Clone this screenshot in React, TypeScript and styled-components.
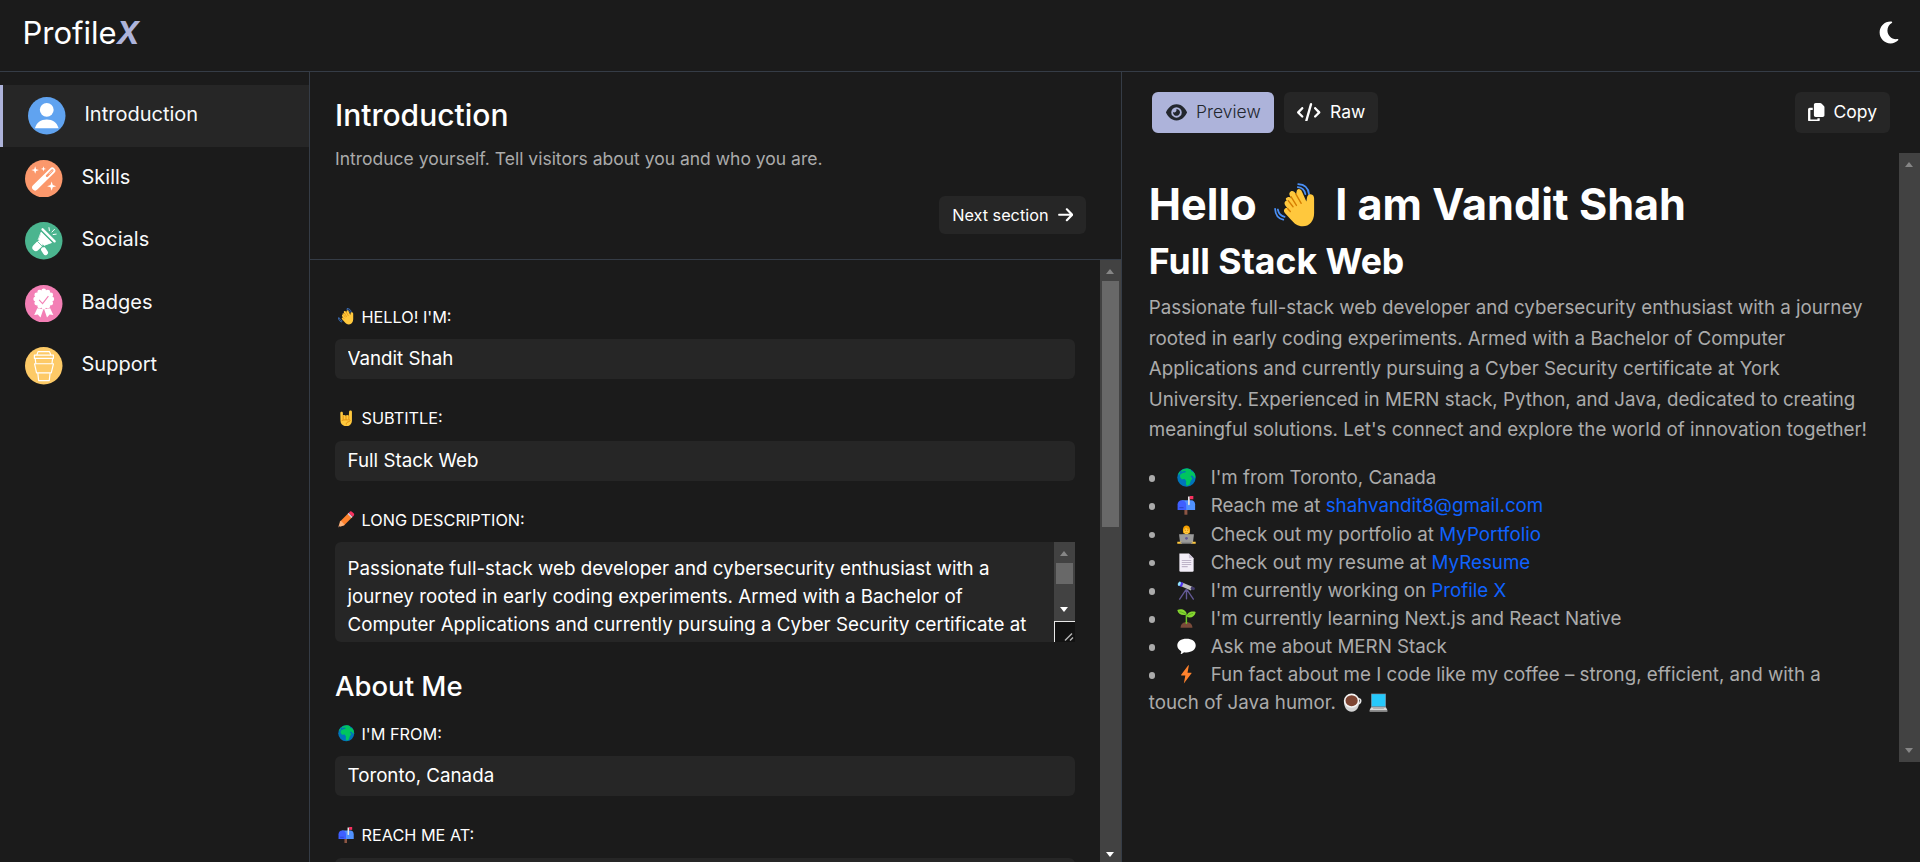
import React from 'react';
import styled, { createGlobalStyle, css } from 'styled-components';
import { FaArrowRight, FaCode, FaCopy, FaEye, FaMoon } from 'react-icons/fa6';

const c = {
  bg: '#1b1b1b',
  surface: '#262626',
  line: '#353c46',
  accent: '#adb3da',
  text: '#ffffff',
  muted: '#ababab',
  link: '#0f62fe',
  track: '#424242',
  thumb: '#686868',
};

const GlobalStyle = createGlobalStyle`
  *, *::before, *::after { box-sizing: border-box; }
  body {
    margin: 0;
    background: ${c.bg};
    color: ${c.text};
    font-family: Inter, "Liberation Sans", sans-serif;
    overflow: hidden;
  }
  h1, h2, h3, p, ul { margin: 0; padding: 0; font-weight: 400; }
`;

/* ---------- Layout ---------- */

const Page = styled.div`
  display: flex;
  flex-direction: column;
  height: 100vh;
  overflow: hidden;
`;

const Header = styled.header`
  flex: none;
  display: flex;
  justify-content: space-between;
  align-items: center;
  height: 72px;
  padding: 0 21px 6px 22.5px;
  border-bottom: 1px solid ${c.line};
`;

const Logo = styled.div`
  font-size: 31px;
  line-height: 39px;
  b {
    color: ${c.accent};
    font-style: italic;
    font-weight: 700;
  }
`;

const ThemeToggle = styled.button`
  display: flex;
  border: 0;
  padding: 0;
  background: none;
  color: ${c.text};
  svg { width: 20px; height: 25px; }
`;

const Columns = styled.div`
  flex: 1;
  min-height: 0;
  display: flex;
`;

const Sidebar = styled.nav`
  flex: none;
  width: 310px;
  padding-top: 12.5px;
  border-right: 1px solid ${c.line};
`;

const NavItem = styled.div<{ $active?: boolean }>`
  display: flex;
  align-items: center;
  gap: 19px;
  height: 62.5px;
  padding-left: 25px;
  font-size: 20px;
  color: #f8f9fa;
  ${(p) => p.$active && css`
    background: ${c.surface};
    border-left: 3px solid ${c.accent};
  `}
  svg { flex: none; width: 37.5px; height: 37.5px; }
  span { padding-bottom: 3px; }
`;

const Editor = styled.main`
  flex: none;
  display: flex;
  flex-direction: column;
  width: 812px;
  border-right: 1px solid ${c.line};
`;

const SectionHead = styled.section`
  flex: none;
  display: flex;
  flex-direction: column;
  height: 188px;
  padding: 25px 35px 0 25px;
  border-bottom: 1px solid ${c.line};
`;

const SectionTitle = styled.h2`
  font-size: 30px;
  line-height: 37px;
  font-weight: 500;
`;

const SectionNote = styled.p`
  margin-top: 12px;
  font-size: 17.5px;
  line-height: 26px;
  color: ${c.muted};
`;

const Button = styled.button<{ $primary?: boolean; $icon: number }>`
  display: flex;
  align-items: center;
  height: 41px;
  padding: 0 13px;
  gap: 9px;
  border: 0;
  border-radius: 6px;
  background: ${(p) => (p.$primary ? c.accent : c.surface)};
  color: ${(p) => (p.$primary ? '#23272e' : c.text)};
  font-family: inherit;
  font-size: 17.5px;
  font-weight: ${(p) => (p.$primary ? 300 : 400)};
  svg { flex: none; width: ${(p) => p.$icon}px; height: 18.75px; margin-bottom: 1px; }
  span { padding-bottom: 1.5px; }
`;

const TabButton = styled(Button)`
  padding: 0 13px 0 13.5px;
  gap: 9.5px;
`;

const NextButton = styled(Button)`
  align-self: flex-end;
  height: 38px;
  margin-top: 24px;
  font-size: 16.25px;
  svg { height: 17.5px; margin: 0; }
  span { padding-bottom: 0; }
`;

const ScrollRow = styled.div`
  flex: 1;
  min-height: 0;
  display: flex;
`;

const Form = styled.form`
  flex: 1;
  overflow: hidden;
  padding: 44.5px 25px 0;
`;

const Field = styled.div`
  margin-bottom: 27px;
`;

const Label = styled.label`
  display: flex;
  align-items: center;
  gap: 7px;
  height: 24px;
  margin-bottom: 10.5px;
  padding-left: 3px;
  font-size: 16.25px;
  text-transform: uppercase;
  svg { width: 16.5px; height: 16.5px; }
`;

const Input = styled.input`
  display: block;
  width: 100%;
  height: 40px;
  padding: 0 12.5px 1px;
  border: 0;
  border-radius: 6px;
  background: ${c.surface};
  color: ${c.text};
  font-family: inherit;
  font-size: 18.75px;
`;

const TextBox = styled.div`
  display: flex;
  height: 100px;
  border-radius: 6px 0 0 6px;
  background: ${c.surface};
`;

const TextBoxContent = styled.div`
  flex: 1;
  padding: 12.5px 12.5px 0;
  font-size: 18.75px;
  line-height: 28px;
`;

const TextBoxRail = styled.div`
  flex: none;
  display: flex;
  flex-direction: column;
  width: 21px;
`;

const Resizer = styled.div`
  height: 21px;
  border-top: 1px solid #e8e8e8;
  border-left: 1px solid #e8e8e8;
  background: #121212;
  svg { display: block; width: 20px; height: 20px; }
`;

const GroupTitle = styled.h3`
  margin-bottom: 18.5px;
  font-size: 27.5px;
  line-height: 34px;
  font-weight: 500;
`;

/* ---------- Scrollbar ---------- */

const Rail = styled.div`
  flex: none;
  display: flex;
  flex-direction: column;
  width: 21px;
  background: ${c.track};
`;

const RailTrack = styled.div`
  flex: 1;
`;

const RailThumb = styled.div`
  width: 17px;
  margin: 0 2px;
  background: ${c.thumb};
`;

const Arrow = styled.div<{ $down?: boolean; $on?: boolean; $inset?: number }>`
  height: 21px;
  padding: ${(p) => p.$inset ?? 9}px 0 0 6px;
  &::before {
    content: '';
    display: block;
    width: 0;
    border: solid transparent;
    border-width: ${(p) => (p.$down ? '5px 4.5px 0' : '0 4.5px 5px')};
    border-${(p) => (p.$down ? 'top' : 'bottom')}-color: ${(p) => (p.$on ? '#fff' : '#868686')};
  }
`;

function Scrollbar({ thumb, height, inset = 7 }: { thumb?: number; height?: number; inset?: number }) {
  return (
    <Rail style={{ height }}>
      <Arrow />
      {thumb ? <RailThumb style={{ height: thumb }} /> : null}
      <RailTrack />
      <Arrow $down $on={!!thumb} $inset={inset} />
    </Rail>
  );
}

/* ---------- Preview ---------- */

const Preview = styled.aside`
  flex: 1;
  min-width: 0;
`;

const Toolbar = styled.div`
  display: flex;
  gap: 10px;
  padding: 20px 30px 20px;
`;

const PushRight = styled.div`
  margin-left: auto;
`;

const Output = styled.div`
  display: flex;
  height: 609px;
`;

const Markdown = styled.article`
  flex: 1;
  padding: 24px 28px 0 26.8px;
  font-size: 18.75px;
  color: ${c.muted};
`;

const H1 = styled.h1`
  display: flex;
  align-items: center;
  gap: 17.5px;
  font-size: 43.2px;
  line-height: 54px;
  font-weight: 700;
  color: ${c.text};
  svg { width: 43.5px; height: 43.5px; margin-top: 2px; }
`;

const H2 = styled.h2`
  margin-top: 9px;
  font-size: 35.6px;
  line-height: 43px;
  font-weight: 700;
  color: ${c.text};
`;

const Paragraph = styled.p`
  margin-top: 10px;
  line-height: 30.5px;
`;

const List = styled.ul`
  margin-top: 18.5px;
  line-height: 28.06px;
  list-style: none;
`;

const Item = styled.li<{ $tall?: boolean }>`
  padding-top: ${(p) => (p.$tall ? 0.8 : 0)}px;
  &::before {
    content: '';
    display: inline-block;
    width: 6.25px;
    height: 6.25px;
    margin: 0 22px 2.5px 0.3px;
    border-radius: 50%;
    background: ${c.muted};
  }
  svg {
    width: 19px;
    height: 19px;
    margin-right: 14.3px;
    margin-bottom: -3px;
    vertical-align: baseline;
  }
`;

const Link = styled.a`
  color: ${c.link};
  text-decoration: none;
`;

const TrailingEmoji = styled.span`
  white-space: nowrap;
  svg { margin: 0 5px -3px 2px; }
`;

/* ---------- Emoji ---------- */

const emoji = {
  wave: (
    <>
      <g fill="none" stroke="#4a8ff5" strokeWidth="1.3" strokeLinecap="round">
        <path d="M17.500 3c3 .2 5 2.200 5.600 5.200M17.800.8c4.500.2 7.500 3 8 7.500M2.800 19.500c.6 2.800 2.200 4.800 5 5.400M.800 19c.2 4.300 2.300 7.200 6 8" />
      </g>
      <path fill="#ffc83d" d="M9.300 10.800c1.200-.8 2.400-.5 3.200.6L11.500 9c-.6-1.300 0-2.500 1-3 1.200-.5 2.300 0 3 1.200l.8 1.300c.2-2.500.6-3.800 1.800-4 1.200 0 2 .8 2.500 2l3.200 7.200.5-3c.2-1.500 1.200-2.600 2.700-2.500 1.700.1 2.500 1.500 2.500 3.200V22c0 6-3.500 9.800-8.300 9.800-4 0-6-1.800-8.500-4.600L8 22c-1.500-1.700-.2-4 1.800-3.500l-1.500-2c-1-1.400-.5-2.600.3-3.200l.8-.4c-.8-1-1-1.600-.1-2.100Z" />
      <path fill="none" stroke="#d67d00" strokeWidth="1" strokeLinecap="round" d="M10.500 13l3.500 4.500M12.500 10l4 6.500M16 8l4 7M10 18.800l2 2.200" />
    </>
  ),
  horns: (
    <>
      <path fill="#ffc83d" d="M4.500 6c0-3.500 5-3.500 5 0v4.500c2-1.500 4-1 5.500.5 2-1.500 4-1.500 6 0l.5-7.500c0-3.300 5.500-3.300 5.500 0V21c0 6.500-4.500 10.500-10.500 10.500S5 28 4.800 21Z" />
      <path fill="none" stroke="#d67d00" strokeWidth="1.400" strokeLinecap="round" d="M10 12v6M15.500 12v6M21 12v5M8 20c5-2 9 0 13-1 3-1 3 2.500.5 3.500-4 1-5.500 2-5.500 5" />
    </>
  ),
  pencil: (
    <>
      <path fill="#ff822d" d="M4 20.500 20.500 4l7.500 7.500L11.500 28Z" />
      <path fill="#ffb27a" d="M4 20.500 5.500 19l7.500 7.500-1.500 1.500L.5 31.500Z" />
      <path fill="#d3c4d4" d="M18.500 6 21 3.500l7.500 7.500-2.500 2.500Z" />
      <path fill="#f8315f" d="M21 3.500 23 1.500c1.500-1.300 3.200-1 4.500.2l2.800 2.800c1.300 1.300 1.500 3 .2 4.500l-2 2Z" />
      <path fill="#4b3a3a" d="M.500 31.500 1.500 28l2.500 2.500Z" />
    </>
  ),
  globe: (
    <>
      <circle cx="16" cy="16" r="15.500" fill="#0074ba" />
      <path fill="#00c55f" d="M7 4.500C10 2 14 .5 18 .7c2 .3 3.500.9 5 1.800l1 3 4 1.500c1.700 2 2.700 4.500 3 7.500l-2 3-2-4-3-1-1 1.500 3 3.500-3 4.500-2 6-4 2.500-2-3 .5-5-2.500-4-5 .5-3-4 .5-4L10 8l4-.5 1-2-4-.5-3 2Z" />
      <path fill="#00c55f" d="M3 8l2-2 .5 3L2 12Z" />
    </>
  ),
  mailbox: (
    <>
      <path fill="#8c5543" d="M12.500 22h5v9.500h-5z" />
      <path fill="#5092ff" d="M8 7h16c4 0 6.500 3 6.500 7v9.500H8Z" />
      <path fill="#3f5fff" d="M8 7c4 0 7.500 3 7.500 7v9.500H1V14c0-4 3-7 7-7Z" />
      <path fill="#2740b8" d="M4 19h7v1.500H4z" />
      <path fill="#e6e6e6" d="M18.500 1h3v13.500a1.800 1.800 0 0 1-3 0Z" />
      <path fill="#f8315f" d="M21.500 0h6v5.500h-6z" />
    </>
  ),
  coder: (
    <>
      <path fill="#f59f00" d="M10 9c-1-11 13-11 12 0l-.5 5h-11Z" />
      <path fill="#ffc83d" d="M11 8c2-1 3-2 4-4 1 2 4 3 6 4 0 5-2 8-5 8s-5-3-5-8Z" />
      <path fill="#d67d00" d="M13 8h2v1.500h-2zM17 8h2v1.500h-2zM14 12.500h4v1h-4z" />
      <path fill="#6c6c6c" d="M6 18c2-3 18-3 20 0v10H6Z" />
      <path fill="#9b9b9b" d="M3.500 15.500h25L27 28.500H5Z" />
      <circle cx="16" cy="22.500" r="2.300" fill="#635994" />
      <path fill="#ffc83d" d="M.5 28h8v3.500h-8zM23.500 28h8v3.500h-8z" />
      <path fill="#8a8a8a" d="M6 28.500h20v3H6z" />
    </>
  ),
  page: (
    <>
      <path fill="#f3eef8" d="M4.500 1H20l8 8v20.500a2 2 0 0 1-2 2H6a2 2 0 0 1-2-2V1Z" />
      <path fill="#cdc4d6" d="M20 1l8 8h-6a2 2 0 0 1-2-2Z" />
      <path stroke="#bfb4c9" strokeWidth="1.800" d="M8 12.500h16M8 16h16M8 19.500h16M8 23h10" />
    </>
  ),
  telescope: (
    <>
      <path fill="none" stroke="#635994" strokeWidth="2.300" strokeLinecap="round" d="M15 15 4.500 30.500M16 15v15M17 15l10.500 15.500" />
      <path fill="#bebebe" d="m9 2.500 17 7-2.500 6.500L7 9Z" />
      <path fill="#433b6b" d="m24.500 9 5 2c1.500 1 .5 4.500-1.500 4.500l-5.500-2Z" />
      <path fill="#5235ef" d="M5.500 1.300 11 3.500 8 10 2.700 7.800Z" />
      <ellipse cx="4" cy="4.600" rx="2.300" ry="3.800" fill="#8fe3ff" transform="rotate(24 4 4.600)" />
    </>
  ),
  seedling: (
    <>
      <path fill="#7a4b3a" d="M6 31.500c0-6 5-9.500 10-9.500s10 3.500 10 9.500Z" />
      <path fill="none" stroke="#6cc529" strokeWidth="2.500" d="M15.800 25V10" />
      <path fill="#86d72f" d="M.500 1.500C8-1.500 16 2 16.500 9.500 8 12 2 8.500.5 1.500ZM31.500 5C24 3 17 6 16 13c7 3 14 .5 15.500-8Z" />
      <path fill="none" stroke="#44911b" strokeWidth="1" d="M4 4.500c4 .5 8 2 11.500 5M17 12.500c3-3 7-4.500 10-5" />
    </>
  ),
  speech: (
    <path fill="#ffffff" d="M16 3c9 0 15.500 4.500 15.500 11.500S25 26 16 26c-1.500 0-3-.2-4.300-.5C10 27.500 8 28.500 6 28.800c1-1.600 1.300-3.200 1-5C3 21.700.5 18.500.5 14.500.5 7.500 7 3 16 3Z" />
  ),
  zap: <path fill="#ff822d" d="M19 .5 7 16.500c-.4.6-.1 1 .5 1H14l-2.500 13.800L24.500 14c.4-.6.1-1-.5-1h-6.300L20 1c0-.6-.5-1-1-.5Z" />,
  coffee: (
    <>
      <path fill="none" stroke="#e6e6e6" strokeWidth="2.500" d="M25 10c6-2 7 6 0 9" />
      <path fill="#d3d3d3" d="M1.500 13h26c0 10-4 18.500-13 18.500S1.500 23 1.500 13Z" />
      <ellipse cx="14.500" cy="13" rx="13" ry="12" fill="#f4f4f4" />
      <ellipse cx="14.500" cy="13" rx="10.300" ry="9.300" fill="#7d4533" />
    </>
  ),
  laptop: (
    <>
      <path fill="#7d7d8a" d="M3.500 1h25v23h-25z" />
      <path fill="#26c9fc" d="M4.500 2h23v20.500h-23z" />
      <path fill="#d9d9d9" d="M3.500 24h25l2.500 5H1Z" />
      <path fill="#a4a4a4" d="M1 29h30v2.500H1zM7 25.500h18v1.300H7z" />
    </>
  ),
};

function Emoji({ name }: { name: keyof typeof emoji }) {
  return <svg viewBox="0 0 32 32">{emoji[name]}</svg>;
}

/* ---------- Navigation icons ---------- */

const star = (x: number, y: number, r: number) => {
  const k = r * 0.25;
  return `M${x} ${y - r}L${x + k} ${y - k}L${x + r} ${y}L${x + k} ${y + k}L${x} ${y + r}L${x - k} ${y + k}L${x - r} ${y}L${x - k} ${y - k}Z`;
};

const scallops = Array.from({ length: 12 }, (_, i) => {
  const a = (i * Math.PI) / 6;
  return { x: 19 + 8.2 * Math.cos(a), y: 14.2 + 8.2 * Math.sin(a) };
});

const navItems = [
  {
    label: 'Introduction',
    color: '#60a3f0',
    art: (
      <g fill="#fff">
        <circle cx="19" cy="13" r="7" />
        <path d="M7 31.700c1.500-5.700 6-9 12-9s10.500 3.300 12 9Z" />
      </g>
    ),
  },
  {
    label: 'Skills',
    color: '#fb986c',
    art: (
      <>
        <path d="M10.300 27.800 27.600 10.700" stroke="#fff" strokeWidth="6.200" strokeLinecap="round" />
        <path d="M22.300 16 27.700 10.600" stroke="#fb986c" strokeWidth="2.400" strokeLinecap="round" />
        <path d="M24.200 14.100 27.700 10.600" stroke="#fff" strokeWidth=".6" />
        <path fill="#fff" d={star(10.3, 10.2, 3.8) + star(18.7, 9, 2.6) + star(27, 26.5, 4.6)} />
      </>
    ),
  },
  {
    label: 'Socials',
    color: '#4bb58f',
    art: (
      <g stroke="#fff" strokeLinecap="round" fill="#fff">
        <path d="M17.800 7.400 30 19.600" strokeWidth="2.400" />
        <path d="M16.600 10.500 27 20.900 19.300 23.700 13.700 18.100Z" strokeWidth=".8" strokeLinejoin="round" />
        <path d="M11 26 14.200 22.800" strokeWidth="7" />
        <path d="M18.800 28 20.800 31" strokeWidth="5" />
        <path d="M24.300 5.700 24.700 8.800M27.300 10.200 29.800 7.500M28.500 12.700 31.600 12.300" strokeWidth="1" />
        <path d="M12.700 19.800 18.300 25.300" stroke="#4bb58f" strokeWidth=".8" />
      </g>
    ),
  },
  {
    label: 'Badges',
    color: '#f37fb5',
    art: (
      <>
        <g fill="#fff">
          <path d="M12.500 23.500 9.300 30.500 13 30 15.700 33 18.600 24.500ZM25.500 23.500 28.700 30.500 25 30 22.300 33 19.400 24.500Z" />
          <circle cx="19" cy="14.200" r="8.800" />
          {scallops.map((s, i) => (
            <circle key={i} cx={s.x} cy={s.y} r="2.400" />
          ))}
        </g>
        <path d="M14.300 15 17.800 18.800 23.700 11.300" fill="none" stroke="#f37fb5" strokeWidth="1.100" />
      </>
    ),
  },
  {
    label: 'Support',
    color: '#fdca67',
    art: (
      <g fill="none" stroke="#fff" strokeWidth="1.200" strokeLinejoin="round">
        <path d="M12 8 13.200 4.700H24.800L26.200 8" />
        <path d="M9.500 8.200H28.800V11.500H9.500Z" />
        <path d="M10.300 11.500 11 16.800M28 11.500 27.300 16.800M13 26.500 13.800 34H24.600L25.400 26.500" />
        <path d="M9.700 17H28.800L26.600 26.200H11.700Z" />
      </g>
    ),
  },
];

/* ---------- Content ---------- */

const opening =
  'Passionate full-stack web developer and cybersecurity enthusiast with a journey rooted in early coding experiments. Armed with a Bachelor of Computer Applications and currently pursuing a Cyber Security certificate at';

const description =
  opening +
  " York University. Experienced in MERN stack, Python, and Java, dedicated to creating meaningful solutions. Let's connect and explore the world of innovation together!";

const facts: { icon: keyof typeof emoji; text: string; link?: string }[] = [
  { icon: 'globe', text: "I'm from Toronto, Canada" },
  { icon: 'mailbox', text: 'Reach me at ', link: 'shahvandit8@gmail.com' },
  { icon: 'coder', text: 'Check out my portfolio at ', link: 'MyPortfolio' },
  { icon: 'page', text: 'Check out my resume at ', link: 'MyResume' },
  { icon: 'telescope', text: "I'm currently working on ", link: 'Profile X' },
  { icon: 'seedling', text: "I'm currently learning Next.js and React Native" },
  { icon: 'speech', text: 'Ask me about MERN Stack' },
];

function TextField({ icon, label, value }: { icon: keyof typeof emoji; label: string; value: string }) {
  return (
    <Field>
      <Label><Emoji name={icon} />{label}</Label>
      <Input defaultValue={value} />
    </Field>
  );
}

export default function App() {
  return (
    <Page>
      <GlobalStyle />
      <Header>
        <Logo>Profile<b>X</b></Logo>
        <ThemeToggle><FaMoon /></ThemeToggle>
      </Header>
      <Columns>
        <Sidebar>
          {navItems.map((n, i) => (
            <NavItem key={n.label} $active={i === 0}>
              <svg viewBox="0 0 38 38">
                <circle cx="19" cy="19" r="19" fill={n.color} />
                {n.art}
              </svg>
              <span>{n.label}</span>
            </NavItem>
          ))}
        </Sidebar>
        <Editor>
          <SectionHead>
            <SectionTitle>Introduction</SectionTitle>
            <SectionNote>Introduce yourself. Tell visitors about you and who you are.</SectionNote>
            <NextButton $icon={15.5}><span>Next section</span><FaArrowRight /></NextButton>
          </SectionHead>
          <ScrollRow>
            <Form>
              <TextField icon="wave" label="Hello! I'm:" value="Vandit Shah" />
              <TextField icon="horns" label="Subtitle:" value="Full Stack Web" />
              <Field>
                <Label><Emoji name="pencil" />Long description:</Label>
                <TextBox>
                  <TextBoxContent>{opening}</TextBoxContent>
                  <TextBoxRail>
                    <Scrollbar thumb={21} height={79} />
                    <Resizer>
                      <svg viewBox="0 0 20 20" stroke="#b4b4b4" strokeWidth="1.500">
                        <path d="M10 18.500 17 11.500M15 18.500 18 15.500" />
                      </svg>
                    </Resizer>
                  </TextBoxRail>
                </TextBox>
              </Field>
              <GroupTitle>About Me</GroupTitle>
              <TextField icon="globe" label="I'm from:" value="Toronto, Canada" />
              <TextField icon="mailbox" label="Reach me at:" value="" />
            </Form>
            <Scrollbar thumb={246} inset={11} />
          </ScrollRow>
        </Editor>
        <Preview>
          <Toolbar>
            <TabButton $primary $icon={21}><FaEye /><span>Preview</span></TabButton>
            <TabButton $icon={23.4}><FaCode /><span>Raw</span></TabButton>
            <PushRight><Button $icon={16.5}><FaCopy /><span>Copy</span></Button></PushRight>
          </Toolbar>
          <Output>
            <Markdown>
              <H1><span>Hello</span><Emoji name="wave" /><span>I am Vandit Shah</span></H1>
              <H2>Full Stack Web</H2>
              <Paragraph>{description}</Paragraph>
              <List>
                {facts.map((f) => (
                  <Item key={f.icon} $tall={f.icon === 'coder'}>
                    <Emoji name={f.icon} />
                    {f.text}
                    {f.link && <Link>{f.link}</Link>}
                  </Item>
                ))}
                <Item>
                  <Emoji name="zap" />
                  Fun fact about me I code like my coffee – strong, efficient, and with a touch of Java humor.{' '}
                  <TrailingEmoji><Emoji name="coffee" /><Emoji name="laptop" /></TrailingEmoji>
                </Item>
              </List>
            </Markdown>
            <Scrollbar />
          </Output>
        </Preview>
      </Columns>
    </Page>
  );
}
